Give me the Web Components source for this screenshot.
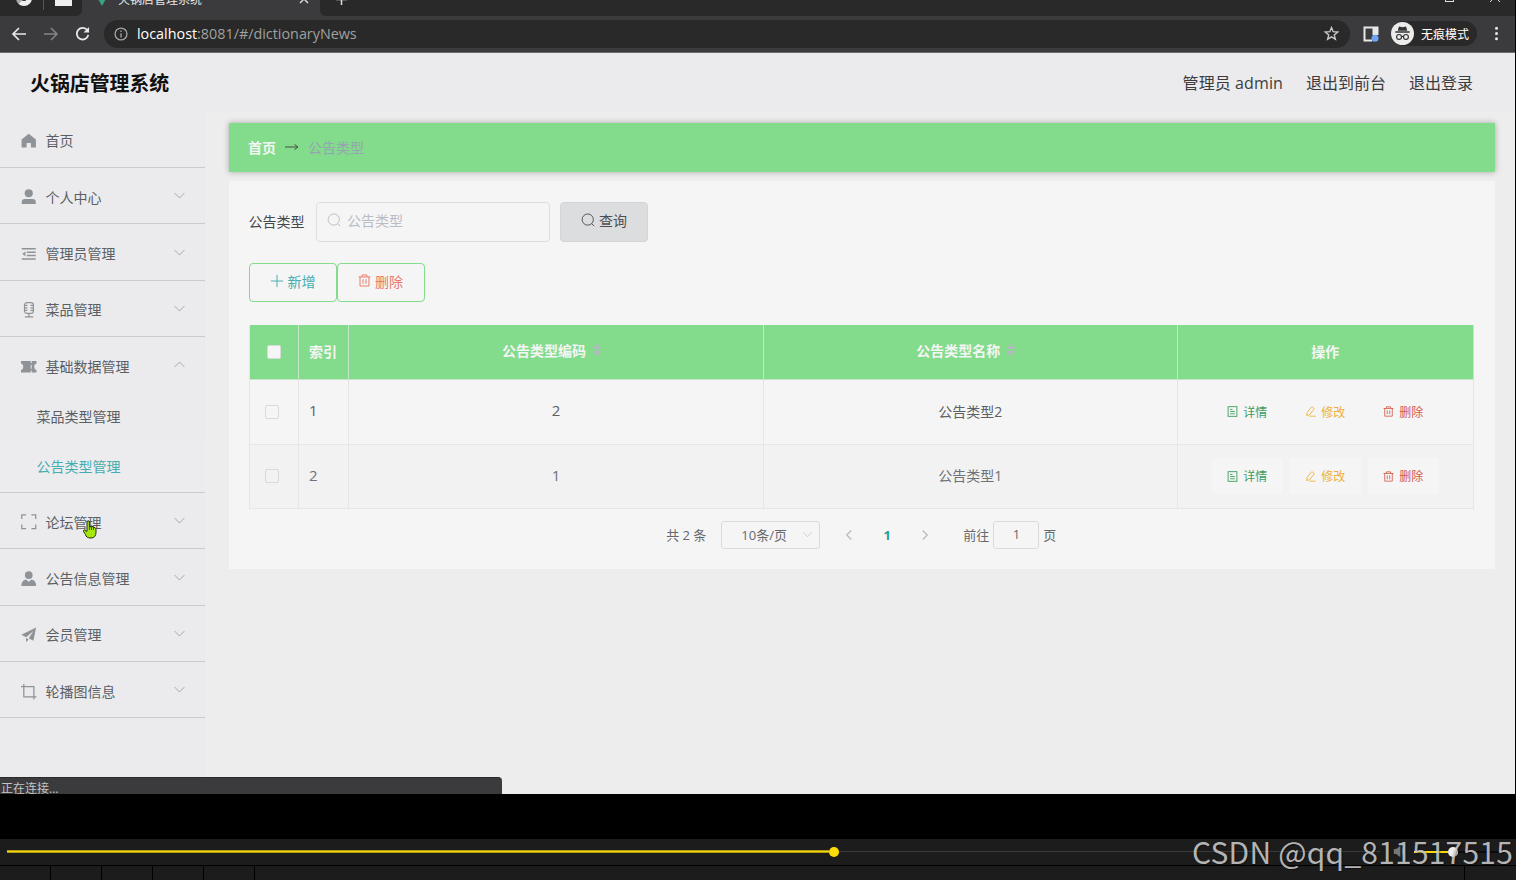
<!DOCTYPE html>
<html lang="zh-CN">
<head>
<meta charset="utf-8">
<title>火锅店管理系统</title>
<style>
    html, body { margin: 0; background: #000; }
    body {
        width: 1516px;
        height: 880px;
        overflow: hidden;
        position: relative;
        font-family: "Open Sans", "Noto Sans CJK SC", sans-serif;
        font-size: 14px;
        color: #606266;
    }
    .screen { width: 1515px; height: 794px; display: flex; flex-direction: column; overflow: hidden; }
    .body { flex: 1; display: flex; min-height: 0; background: #ededee; }
</style>
</head>
<body>
    <div class="screen">
        <browser-bar><span slot="title">火锅店管理系统</span><span slot="host">localhost</span><span slot="path">:8081/#/dictionaryNews</span></browser-bar>
        <app-header>
            火锅店管理系统
            <span slot="links">管理员 admin</span>
            <span slot="links">退出到前台</span>
            <span slot="links">退出登录</span>
        </app-header>
        <div class="body">
            <side-menu>
                <side-item icon="home" plain>首页</side-item>
                <side-item icon="user">个人中心</side-item>
                <side-item icon="fold">管理员管理</side-item>
                <side-item icon="mic">菜品管理</side-item>
                <side-item icon="ticket" open>基础数据管理
                    <side-sub slot="sub">菜品类型管理</side-sub>
                    <side-sub slot="sub" active>公告类型管理</side-sub>
                </side-item>
                <side-item icon="full">论坛管理</side-item>
                <side-item icon="custom">公告信息管理</side-item>
                <side-item icon="plane">会员管理</side-item>
                <side-item icon="crop">轮播图信息</side-item>
            </side-menu>
            <main-view>
                <bread-crumb slot="crumb"><b slot="home">首页</b>公告类型</bread-crumb>
                <search-form></search-form>
                <data-table></data-table>
                <page-nav></page-nav>
            </main-view>
        </div>
    </div>
    <status-bubble>正在连接...</status-bubble>
    <video-bar></video-bar>
    <hand-cursor></hand-cursor>
    <water-mark>CSDN @qq_811517515</water-mark>

<script>
    // All glyphs share a 16x16 box
    const ICONS = {
        home: '<path fill="currentColor" d="M8 .8 15.4 6.8V15H10.2V10.2H5.8V15H.6V6.8Z"/>',
        user: '<circle fill="currentColor" cx="8" cy="4.4" r="4.2"/><path fill="currentColor" d="M.8 15.4V13Q.8 10.2 4 10.2H12Q15.2 10.2 15.2 13V15.4Z"/>',
        fold: '<path fill="none" stroke="currentColor" stroke-width="1.7" d="M.8 2.8H15.2M6 6.4H15.2M6 9.8H15.2M.8 13.4H15.2"/><path fill="currentColor" d="M4.6 5.6V10.6L1.2 8.1Z"/>',
        mic: '<g fill="none" stroke="currentColor" stroke-width="1.2"><rect x="3.6" y=".7" width="9.2" height="11" rx="2.5"/><path d="M8.2 11.7V15M4 15.4H12.6M4 3.4H6.6M4 6H6.6M4 8.6H6.6M9.8 3.4H12.4M9.8 6H12.4M9.8 8.6H12.4"/></g>',
        ticket: '<path fill="currentColor" d="M0 2H10V4.2H11V2H16V4.6Q13.6 5 13.6 8T16 11.4V14H11V11.8H10V14H0V11.4Q2.4 11 2.4 8T0 4.6ZM10 6V10H11V6Z"/>',
        full: '<path fill="none" stroke="currentColor" stroke-width="1.3" d="M.8 5.2V.9H5.2M10.8.9H15.2V5.2M15.2 10.8V15.1H10.8M5.2 15.1H.8V10.8"/>',
        custom: '<circle fill="currentColor" cx="8" cy="4.2" r="4"/><path fill="currentColor" d="M.3 15.4Q.5 9.6 5 8.8L8 11.2 11 8.8Q15.5 9.6 15.7 15.4Z"/>',
        plane: '<path fill="currentColor" d="M15.6.6 12.8 14.2 8 11.7 12.8 4 5.4 10.5.3 8ZM5.2 11.4 8 12.9 5.2 15.6Z"/>',
        crop: '<path fill="none" stroke="currentColor" stroke-width="1.3" d="M0 2.8H13.3V16M2.9 0V13.2H16"/>',
        down: '<path fill="none" stroke="currentColor" d="M2 5 8 11 14 5"/>',
        up: '<path fill="none" stroke="currentColor" d="M2 11 8 5 14 11"/>',
        left: '<path fill="none" stroke="currentColor" stroke-width="1.7" d="M11 2 5 8 11 14"/>',
        right: '<path fill="none" stroke="currentColor" stroke-width="1.7" d="M5 2 11 8 5 14"/>',
        search: '<g fill="none" stroke="currentColor" stroke-width="1.1"><circle cx="7.7" cy="7.5" r="6.4"/><path d="M12.2 12 15 15"/></g>',
        plus: '<path fill="none" stroke="currentColor" stroke-width="1.1" d="M8 1V15M1 8H15"/>',
        trash: '<g fill="none" stroke="currentColor" stroke-width="1.2"><path d="M.8 3.6H15.2M5 3.3V1.2H11V3.3M2.5 3.6V14.8H13.5V3.6M6.2 6.4V12M9.8 6.4V12"/></g>',
        doc: '<g fill="none" stroke="currentColor" stroke-width="1.3"><rect x="1.6" y="1" width="12.8" height="14"/><path d="M4.5 5H8M4.5 8H11.5M4.5 11.3H11.5"/></g>',
        edit: '<g fill="none" stroke="currentColor" stroke-width="1.3"><path d="M3 9.5 9 1.8Q10 .8 11.2 1.7L12.7 2.9Q13.7 3.9 12.8 5L6.8 12.5 2.3 13.9ZM6.500 14.8H15.5"/></g>',
        back: '<path fill="none" stroke="currentColor" stroke-width="1.7" d="M15 8H2M8 2 2 8 8 14"/>',
        forward: '<path fill="none" stroke="currentColor" stroke-width="1.5" d="M1 8H14M8 2 14 8 8 14"/>',
        reload: '<path fill="none" stroke="currentColor" stroke-width="1.9" d="M13.2 4.6A6.2 6.2 0 1 0 14.2 9.5"/><path fill="currentColor" d="M15 1V7H9Z"/>',
        info: '<g fill="none" stroke="currentColor" stroke-width="1.5"><circle cx="8" cy="8" r="6.8"/><path d="M8 7V12M8 4V5.6"/></g>',
        star: '<path fill="none" stroke="currentColor" stroke-width="1.4" d="M8 1.6 9.8 6.1 14.7 6.4 10.9 9.5 12.2 14.2 8 11.6 3.8 14.2 5.1 9.5 1.3 6.4 6.2 6.1Z"/>',
        panel: '<path fill="none" stroke="#e8e8e8" stroke-width="2" d="M14.5 9V1.5H1.5V14.5H9"/><path fill="#e8e8e8" d="M9.5 1H15V9H9.5Z"/><circle cx="12" cy="12.3" r="3.500" fill="#6ea4f5"/>',
        spy: '<circle cx="8" cy="8" r="8" fill="#ececec"/><path fill="#333" d="M5.5 3.2 8 3.6 10.5 3.2 11.3 6H4.7ZM3 6.5H13V7.4H3Z"/><g fill="none" stroke="#333" stroke-width=".8"><circle cx="5.6" cy="10.4" r="1.7"/><circle cx="10.4" cy="10.4" r="1.7"/><path d="M7.3 10.2Q8 9.8 8.7 10.2"/></g>',
        dots: '<g fill="currentColor"><circle cx="8" cy="2.5" r="1.6"/><circle cx="8" cy="8" r="1.6"/><circle cx="8" cy="13.5" r="1.6"/></g>',
        speaker: '<path fill="#777" d="M1 5H4L9 1V15L4 11H1Z"/><path stroke="#555" fill="none" d="M11.5 4V12M14 5.5V10.5"/>'
    };

    class UiIcon extends HTMLElement {
        constructor() {
            super();
            this.attachShadow({ mode: 'open' });
        }
        connectedCallback() {
            const size = this.getAttribute('size') || 16;
            this.shadowRoot.innerHTML = `
                <style>
                    :host { display: inline-flex; flex: none; }
                    svg { display: block; overflow: visible; }
                </style>
                <svg width="${size}" height="${size}" viewBox="0 0 16 16">${ICONS[this.getAttribute('name')]}</svg>
            `;
        }
    }
    customElements.define('ui-icon', UiIcon);

    // Helper for elements whose markup is static
    function define(name, html) {
        customElements.define(name, class extends HTMLElement {
            constructor() {
                super();
                this.attachShadow({ mode: 'open' });
                this.shadowRoot.innerHTML = html;
            }
        });
    }

    define('browser-bar', `
        <style>
            :host { display: block; flex: none; height: 53px; background: #3b3b3d; overflow: hidden; color: #e8e8e8; }
            .tabs { height: 34px; margin-top: -18px; display: flex; align-items: stretch; font-size: 12px; }
            .pinned { width: 82px; box-sizing: border-box; background: #292929; border-radius: 0 0 6px 0; display: flex; align-items: center; padding-left: 16px; }
            .avatar { width: 6px; height: 6px; border: 5px solid #eee; border-radius: 50%; border-left-color: #aaa; margin-top: -3px; }
            .sep { width: 1px; height: 22px; background: #555; margin: 0 11px 0 11px; }
            .box { width: 17px; height: 14px; background: #eee; }
            .tab { width: 238px; box-sizing: border-box; display: flex; align-items: center; padding: 0 11px 0 15px; }
            .vue { width: 0; border: 5px solid transparent; border-top: 9px solid #35a57c; border-bottom: 0; margin: 4px 11px 0 0; }
            .name { flex: 1; line-height: 18px; padding-top: 2px; }
            .rest { flex: 1; background: #292929; border-radius: 0 0 0 6px; display: flex; align-items: center; padding: 0 15px 0 16px; }
            .rest .gap { flex: 1; }
            .win { width: 7px; height: 7px; border: 1px solid #ddd; margin: -4px 36px 0 0; }
            .rest .exit { margin-top: -4px; }
            .bar { height: 37px; display: flex; align-items: center; border-bottom: 1px solid #6b6b6d; box-sizing: border-box; padding: 0 11px 1px 11px; }
            .bar > ui-icon { margin-right: 16px; }
            .dim { color: #858587; }
            .url { flex: 1; height: 28px; border-radius: 14px; background: #292929; display: flex; align-items: center; padding: 0 11px 0 10px; font-size: 14.35px; margin-right: 13px; color: #fff; }
            .url ui-icon { color: #a5a5a5; margin-right: 9px; }
            .url .path { color: #a0a0a0; flex: 1; }
            .url .star { margin: 0; color: #ccc; }
            .bar .side { margin-right: 12px; }
            .who { height: 25px; width: 86px; box-sizing: border-box; border-radius: 13px; background: #292929; display: flex; align-items: center; gap: 7px; font-size: 12px; color: #fff; white-space: nowrap; margin-right: 12px; }
            .bar .menu { margin: 0; }
        </style>
        <div class="tabs">
            <div class="pinned"><span class="avatar"></span><span class="sep"></span><span class="box"></span></div>
            <div class="tab"><span class="vue"></span><span class="name"><slot name="title"></slot></span>
                <svg width="10" height="10"><path d="M1 1 9 9M9 1 1 9" stroke="#ddd" stroke-width="1.4"/></svg></div>
            <div class="rest"><svg width="11" height="11"><path d="M5.5 0V11M0 5.5H11" stroke="#ddd" stroke-width="1.5"/></svg>
                <span class="gap"></span><span class="win"></span>
                <svg class="exit" width="10" height="10"><path d="M0 0 10 10M10 0 0 10" stroke="#ddd"/></svg></div>
        </div>
        <div class="bar">
            <ui-icon name="back"></ui-icon>
            <ui-icon name="forward" class="dim"></ui-icon>
            <ui-icon name="reload" size="15" style="margin-right:14px"></ui-icon>
            <div class="url">
                <ui-icon name="info" size="14"></ui-icon>
                <slot name="host"></slot><span class="path"><slot name="path"></slot></span>
                <ui-icon name="star" class="star" size="15"></ui-icon>
            </div>
            <ui-icon name="panel" class="side"></ui-icon>
            <div class="who"><ui-icon name="spy" size="23"></ui-icon>无痕模式</div>
            <ui-icon name="dots" size="15" class="menu"></ui-icon>
        </div>
    `);

    define('app-header', `
        <style>
            :host { display: flex; flex: none; height: 58px; align-items: center; justify-content: space-between;
                padding: 2px 42px 0 30px; box-sizing: border-box; background: #ebebed; }
            h1 { margin: 1px 0 0; font-size: 19.9px; line-height: 30px; font-weight: 700; color: #111; }
            nav { display: flex; gap: 23px; font-size: 16px; line-height: 24px; color: #3c3c3e; }
            ::slotted(span:first-of-type) { letter-spacing: .1px; }
        </style>
        <h1><slot></slot></h1>
        <nav><slot name="links"></slot></nav>
    `);

    define('side-menu', `
        <style>
            :host { display: block; flex: none; width: 205px; padding-top: .6px; background: #ebebed; }
        </style>
        <slot></slot>
    `);

    define('side-sub', `
        <style>
            :host { display: flex; align-items: center; height: 49.7px; padding-left: 36.500px; color: #5b5f64; }
            :host([active]) { color: #45adb0; background: #ececee; }
        </style>
        <slot></slot>
    `);

    class SideItem extends HTMLElement {
        constructor() {
            super();
            this.attachShadow({ mode: 'open' });
        }
        connectedCallback() {
            const open = this.hasAttribute('open');
            const arrow = this.hasAttribute('plain') ? '' : `<ui-icon class="arrow" name="${open ? 'up' : 'down'}" size="13"></ui-icon>`;
            this.shadowRoot.innerHTML = `
                <style>
                    :host { display: block; border-bottom: 1px solid #cbcbcc; line-height: 20px; color: #5b5f64; }
                    .title { display: flex; align-items: center; height: 55.4px; padding: 0 19px 0 21px; }
                    .icon { color: #8f9297; margin: 3px 9px 0 0; }
                    .text { flex: 1; padding-top: 4px; }
                    .arrow { color: #96999d; }
                </style>
                <div class="title">
                    <ui-icon class="icon" name="${this.getAttribute('icon')}" size="15.5"></ui-icon>
                    <span class="text"><slot></slot></span>${arrow}
                </div>
                <slot name="sub"></slot>
            `;
        }
    }
    customElements.define('side-item', SideItem);

    define('main-view', `
        <style>
            :host { display: block; flex: 1; padding: 12px 20.5px 0 23.5px; }
            section { margin-top: 9.500px; height: 387.5px; box-sizing: border-box; background: #f5f5f5; padding: 21px 20.5px 0 20px; }
        </style>
        <slot name="crumb"></slot>
        <section><slot></slot></section>
    `);

    define('bread-crumb', `
        <style>
            :host { display: flex; align-items: center; height: 48.5px; padding-left: 19.5px;
                background: #83dc8b; box-shadow: 0 0 6px rgba(0, 0, 0, .3); color: #98a3b1; }
            .home { color: #f5f5f5; }
            svg { margin: 0 9px; }
        </style>
        <span class="home"><slot name="home"></slot></span>
        <svg width="14" height="8"><path d="M0 4H13M9.5 1.5 13 4 9.5 6.5" fill="none" stroke="#46504a"/></svg>
        <span><slot></slot></span>
    `);

    define('search-form', `
        <style>
            :host { display: block; }
            .row { display: flex; align-items: center; }
            .row + .row { margin-top: 21px; }
            label { color: #46484b; width: 67.5px; padding-bottom: 2px; }
            .input, .btn { height: 39.5px; box-sizing: border-box; border: 1px solid #dcdee2; border-radius: 4px;
                display: flex; align-items: center; padding-bottom: 3px; }
            .input { width: 234px; gap: 6px; padding-left: 10px; color: #b9bcc3; margin-right: 10px; }
            .btn { width: 88px; border-color: #83dc8b; justify-content: center; gap: 4px; }
            .btn.query { background: #dcdddf; border-color: #d3d5d9; color: #4c4e50; padding-bottom: 4px; }
            .add { color: #45adb0; }
            .del { color: #e9786a; }
        </style>
        <div class="row">
            <label>公告类型</label>
            <div class="input"><ui-icon name="search" size="14"></ui-icon>公告类型</div>
            <div class="btn query"><ui-icon name="search" size="14"></ui-icon>查询</div>
        </div>
        <div class="row">
            <div class="btn add"><ui-icon name="plus" size="14"></ui-icon>新增</div>
            <div class="btn del"><ui-icon name="trash" size="13"></ui-icon>删除</div>
        </div>
    `);

    define('row-action', `
        <style>
            :host { display: flex; align-items: center; justify-content: center; gap: 5px; width: 71px; height: 36px;
                background: #f5f5f5; font-size: 12px; }
        </style>
        <slot></slot>
    `);

    class DataTable extends HTMLElement {
        constructor() {
            super();
            this.attachShadow({ mode: 'open' });
        }
        connectedCallback() {
            const rows = [['1', '2', '公告类型2'], ['2', '1', '公告类型1']];
            const sort = '<svg width="10" height="14" viewBox="0 0 10 14"><path fill="#b4b8bf" d="M5 1 9.500 6H.5ZM5 13 9.500 8H.5Z"/></svg>';
            this.shadowRoot.innerHTML = `
                <style>
                    :host { display: block; margin-top: 23px; border-left: 1px solid #e6e6e7; }
                    .row { display: grid; grid-template-columns: 49.5px 50px 415px 413.5px 1fr; height: 64.5px; color: #5c5f64; }
                    .row > div { border-right: 1px solid #e6e6e7; border-bottom: 1px solid #e6e6e7; display: flex;
                        align-items: center; justify-content: center; box-sizing: border-box; padding-bottom: 2px; }
                    .row > .idx { justify-content: flex-start; padding-left: 10px; }
                    .row .num { font-size: 15px; padding-bottom: 3px; }
                    .row:last-child { background: #f2f2f2; color: #6e7176; }
                    .row.head { height: 55px; background: #83dc8b; color: #f5f5f5; font-weight: 700; }
                    .head > div { border-color: #c4e6c9; }
                    .head .sort { padding-bottom: 4px; }
                    svg { flex: none; margin: 0 8px 0 6px; }
                    i { width: 14px; height: 14px; box-sizing: border-box; border: 1px solid #d9dadd; border-radius: 2px; margin-right: 4px; }
                    .head i { background: #f5f5f5; margin: 0; }
                    .row > .check { padding-bottom: 0; }
                    .row > .acts { gap: 7px; padding-bottom: 0; }
                </style>
                <div class="row head">
                    <div class="check"><i></i></div><div class="idx">索引</div>
                    <div class="sort">公告类型编码${sort}</div>
                    <div class="sort">公告类型名称${sort}</div>
                    <div>操作</div>
                </div>
                ${rows.map(r => `
                <div class="row">
                    <div class="check"><i></i></div><div class="idx num">${r[0]}</div>
                    <div class="num">${r[1]}</div><div>${r[2]}</div>
                    <div class="acts">
                        <row-action style="color:#3f9a61"><ui-icon name="doc" size="11"></ui-icon>详情</row-action>
                        <row-action style="color:#edb03a"><ui-icon name="edit" size="11"></ui-icon>修改</row-action>
                        <row-action style="color:#cf5a49"><ui-icon name="trash" size="11"></ui-icon>删除</row-action>
                    </div>
                </div>`).join('')}
            `;
        }
    }
    customElements.define('data-table', DataTable);

    define('page-nav', `
        <style>
            :host { display: flex; align-items: center; justify-content: center; height: 28px; margin-top: 12px; font-size: 13px; color: #66696e; }
            .box { height: 28px; box-sizing: border-box; border: 1px solid #d9dbdf; border-radius: 3px; display: flex; align-items: center; padding-bottom: 2px; }
            span { padding-bottom: 2px; }
            .size { width: 99px; justify-content: space-between; padding: 0 6px 2px 19px; margin: 0 23px 0 15px; }
            .jump { width: 46px; justify-content: center; margin: 0 4px; }
            ui-icon { color: #b7bac1; }
            b { color: #27a196; width: 64px; text-align: center; padding-bottom: 1px; }
            .last { margin-right: 32px; }
        </style>
        <span>共 2 条</span>
        <div class="box size">10条/页<ui-icon name="down" size="11"></ui-icon></div>
        <ui-icon name="left" size="12"></ui-icon>
        <b>1</b>
        <ui-icon name="right" size="12" class="last"></ui-icon>
        <span>前往</span><div class="box jump">1</div><span>页</span>
    `);

    define('status-bubble', `
        <style>
            :host { position: absolute; left: 0; top: 777px; width: 502px; height: 17px; box-sizing: border-box; overflow: hidden;
                background: #3b3b3d; border-top: 1px solid #2a2a2a; border-radius: 0 4px 0 0; color: #c4c4c4;
                font-size: 12px; line-height: 22px; padding-left: 1px; }
        </style>
        <slot></slot>
    `);

    define('video-bar', `
        <style>
            :host { display: block; padding-top: 45px; }
            .track { height: 26px; background: #1c1c1c; display: flex; align-items: center; padding: 0 0 1px 7px; box-sizing: border-box; }
            .done { width: 822px; height: 3px; background: linear-gradient(#8a7a10, #f6d80c, #8a7a10); }
            .knob { width: 10px; height: 10px; border-radius: 50%; background: #fbdc08; }
            .left { width: 541px; height: 1px; background: #3a3a3a; }
            ui-icon { margin: 0 8px 0 13px; }
            .vol { width: 34px; height: 2px; background: #f6d80c; }
            .knob.white { background: #eee; }
            .off { width: 42px; height: 2px; background: #0c0c0c; }
            .cells { display: flex; height: 14px; margin-top: 1px; gap: 1px; }
            .cells span { width: 50px; background: #1c1c1c; }
            .cells .wide { width: 1209px; }
            .cells .end { flex: 1; }
        </style>
        <div class="track">
            <div class="done"></div><div class="knob"></div><div class="left"></div>
            <ui-icon name="speaker" size="13"></ui-icon>
            <div class="vol"></div><div class="knob white"></div><div class="off"></div>
        </div>
        <div class="cells"><span></span><span></span><span></span><span></span><span></span><span class="wide"></span><span class="end"></span></div>
    `);

    define('hand-cursor', `
        <style>
            :host { position: absolute; left: 82px; top: 520px; }
            svg { display: block; }
        </style>
        <svg width="16" height="19" viewBox="0 0 16 19"><path fill="#a6e80a" stroke="#25330a" d="M5 11.5V2Q5 .8 6.2.8T7.4 2V6.5L9 6.8V5.9L11 7V6.6L13 7.8Q14 8.2 14 9.5V12Q14 18 9 18T3.5 14.5L1.5 11.5Q1 10 2.5 10.2Z"/><path stroke="#25330a" stroke-width=".8" d="M7.4 6.5V10M9.5 7V10M11.5 7V10"/></svg>
    `);

    define('water-mark', `
        <style>
            :host { position: absolute; right: 3px; top: 832px; font: 30px/38px "Noto Sans CJK SC", sans-serif;
                letter-spacing: .2px; color: rgba(210, 210, 210, .85); white-space: nowrap; text-shadow: 1px 1px 1px rgba(0, 0, 0, .4); }
        </style>
        <slot></slot>
    `);
</script>
</body>
</html>
